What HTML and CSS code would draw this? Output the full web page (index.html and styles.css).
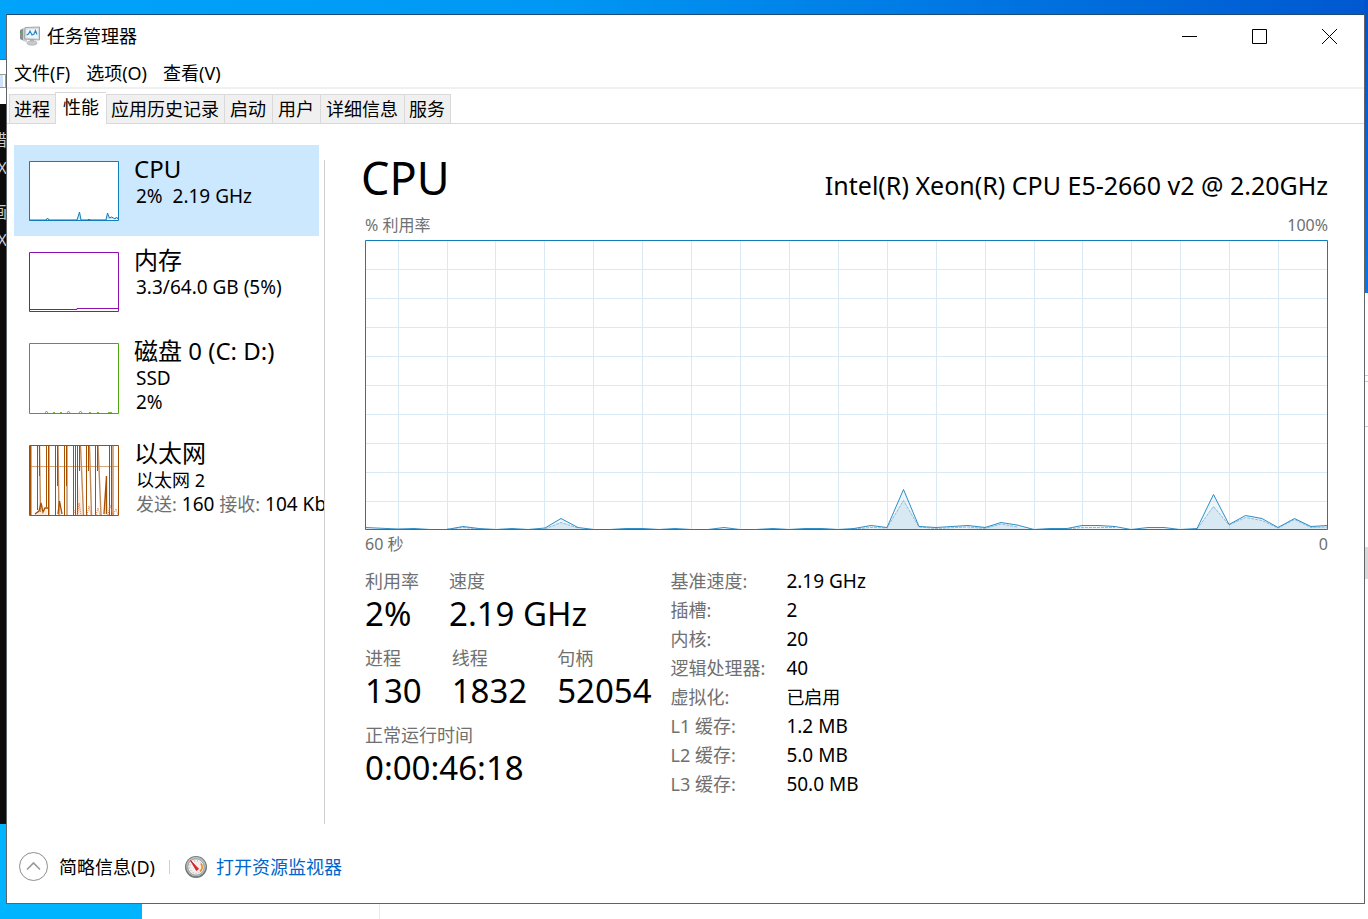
FILE: index.html
```html
<!DOCTYPE html>
<html lang="zh-CN">
<head>
<meta charset="utf-8">
<title>任务管理器</title>
<link rel="stylesheet" href="styles.css">
</head>
<body class="desktop">
<div class="backdrop" aria-hidden="true">
  <div class="sheet"></div>
  <div class="wallpaper-left"></div>
  <div class="explorer"><span class="explorer-box"></span></div>
  <div class="console">
    <span class="console-line line-a">错</span>
    <span class="console-line line-b">X</span>
    <span class="console-line line-c">画</span>
    <span class="console-line line-d">X</span>
  </div>
  <div class="edge-right"><span class="edge-thumb"></span></div>
</div>
<div class="window">
  <header class="titlebar">
    <svg class="app-icon" width="22" height="20" viewBox="0 0 22 20">
      <path d="M1 4l4-2v13l-4-2z" fill="#8b8f92"/>
      <path d="M4 2h4v14l-4-1z" fill="#c9cdcf"/>
      <path d="M1.500 5v2" stroke="#4da34a"/>
      <path d="M6 1.500L20.500 1v13L5.500 13z" fill="#d9dcde" stroke="#a2a6a9"/>
      <path d="M7.500 3.500L19 3v9.300L7 11.500z" fill="#eef7fd"/>
      <path d="M7.500 9l2-1 1.500-3 2 4 2-1 1.500-3.500 1.500 4" fill="none" stroke="#2b87c4" stroke-width="1.200"/>
      <path d="M11 14h4v2h-4z" fill="#b1b4b6"/>
      <ellipse cx="13" cy="17" rx="5" ry="2.200" fill="#c6c9cb" stroke="#a6a9ab" stroke-width=".6"/>
    </svg>
    <h1 class="window-title">任务管理器</h1>
    <div class="window-controls">
      <button class="control" type="button" aria-label="最小化"><svg width="15" height="15" viewBox="0 0 15 15"><path d="M0 7.500h15"/></svg></button>
      <button class="control" type="button" aria-label="最大化"><svg width="15" height="15" viewBox="0 0 15 15"><path d="M.5.5h14v14H.5z"/></svg></button>
      <button class="control" type="button" aria-label="关闭"><svg width="15" height="15" viewBox="0 0 15 15"><path d="M0 0l15 15M15 0L0 15"/></svg></button>
    </div>
  </header>
  <nav class="menubar">
    <button class="menu" type="button">文件(F)</button>
    <button class="menu" type="button">选项(O)</button>
    <button class="menu" type="button">查看(V)</button>
  </nav>
  <div class="tabs" role="tablist">
    <button class="tab tab-tight" type="button" role="tab">进程</button>
    <button class="tab tab-active" type="button" role="tab" aria-selected="true">性能</button>
    <button class="tab tab-tight" type="button" role="tab">应用历史记录</button>
    <button class="tab" type="button" role="tab">启动</button>
    <button class="tab" type="button" role="tab">用户</button>
    <button class="tab" type="button" role="tab">详细信息</button>
    <button class="tab tab-tight" type="button" role="tab">服务</button>
  </div>
  <div class="content">
    <aside class="resources">
      <button class="resource resource-selected" type="button">
        <svg class="thumb" width="90" height="60" viewBox="0 0 90 60">
          <path d="M.5.5h89v59H.5z" fill="#fff" stroke="#117dbb"/>
          <path d="M0 59h17l1.500-2 1.500 2h28l2.500-8 1.500 8h7l1-1 1 1h16l1.500-7 2 5 2-1 2 1 1.500 1 1.500-2 1.500 2" fill="#cfe2ef" stroke="#117dbb"/>
        </svg>
        <span class="resource-text"><span class="resource-name">CPU</span><span class="resource-sub">2%&nbsp; 2.19 GHz</span></span>
      </button>
      <button class="resource" type="button">
        <svg class="thumb" width="90" height="60" viewBox="0 0 90 60">
          <path d="M.5.5h89v59H.5z" fill="#fff" stroke="#8b12ae"/>
          <path d="M0 57.500h48v-1h42" fill="none" stroke="#8b12ae"/>
        </svg>
        <span class="resource-text"><span class="resource-name">内存</span><span class="resource-sub">3.3/64.0 GB (5%)</span></span>
      </button>
      <button class="resource" type="button">
        <svg class="thumb" width="90" height="71" viewBox="0 0 90 71">
          <path d="M.5.5h89v70H.5z" fill="#fff" stroke="#4da60c"/>
          <path d="M16 70l1.500-2 1.500 2M24 69.500h2M31 69.500h2M38 70l1.500-2 1.500 2M50 70l1.500-2 1.500 2M60 69.500h2M68 69.500h2M79 69.500h4" fill="none" stroke="#4da60c" stroke-opacity=".8"/>
        </svg>
        <span class="resource-text"><span class="resource-name">磁盘 0 (C: D:)</span><span class="resource-sub">SSD</span><span class="resource-sub">2%</span></span>
      </button>
      <button class="resource" type="button">
        <svg class="thumb" width="90" height="71" viewBox="0 0 90 71">
          <path d="M.5.5h89v70H.5z" fill="#fff" stroke="#a74f01"/>
          <path d="M5 70l6-7 2-5 2 5 3-1V70zM29 70l2-15 2 15zM47 70l3-32 4 32zM75 70l2-32 2 32z" fill="#fbe9dd"/>
          <path d="M1 21.500h88" stroke="#d2a780"/>
          <path d="M2 1v69M10.500 1l1 66M20 1v69M29 1l1 69M38 1v69M51.500 1l3 69M60.500 1l2 69M69 1l3 69M84 1v69" fill="none" stroke="#c08a5a" stroke-width="1.400"/>
          <path d="M1.500 1v69M8.500 1v64M10.500 1v30M17.500 1v61M19.500 1v69M26.500 1v69M28.500 1v40M35.500 1v69M37.500 1v40M44.500 1v69M46.500 1v69M48.500 1v69M50.500 1v25M57.500 1v69M59.500 1v25M66.500 1v69M68.500 1v25M80.500 1v69M82.500 1v69" stroke="#a74f01"/>
          <path d="M6 69l4-3 2-8 2 9 2-4h3M29 69l1.500-13L33 69M75 69l2.500-38v38" fill="none" stroke="#a74f01" stroke-width="1.300"/>
          <path d="M45 68l1-3M48.500 70l1.500-12 2 12M58 70l2-9 2 9M67 70l2-7 2 7M79 70l2-10 3 10 3-6 2 6" fill="none" stroke="#e8753c" stroke-dasharray="1 1"/>
        </svg>
        <span class="resource-text"><span class="resource-name">以太网</span><span class="resource-sub cjk">以太网 2</span><span class="resource-sub"><span class="muted cjk">发送:</span> 160 <span class="muted cjk">接收:</span> 104 Kbps</span></span>
      </button>
    </aside>
    <div class="divider"></div>
    <main class="detail">
      <div class="detail-head"><h2 class="detail-title">CPU</h2><span class="model">Intel(R) Xeon(R) CPU E5-2660 v2 @ 2.20GHz</span></div>
      <div class="axis axis-top"><span>% 利用率</span><span>100%</span></div>
      <svg class="chart" viewBox="0 0 963 290" preserveAspectRatio="none" role="img" aria-label="CPU 利用率">
        <path class="grid" d="M33.500 1v288M82.500 1v288M130.500 1v288M179.500 1v288M228.500 1v288M277.500 1v288M326.500 1v288M375.500 1v288M424.500 1v288M473.500 1v288M522.500 1v288M571.500 1v288M620.500 1v288M669.500 1v288M717.500 1v288M766.500 1v288M815.500 1v288M864.500 1v288M913.500 1v288M1 29.500h961M1 58.500h961M1 87.500h961M1 116.500h961M1 145.500h961M1 174.500h961M1 203.500h961M1 232.500h961M1 261.500h961"/>
        <path class="area" d="M0 290V288L33 289L49 288.500L65 289.500H82L98 286.500L114 288.500L131 289.500L147 288.500L163 289.500L180 288L196 278.500L213 287.500L229 289.500H245L261 288.500H278L294 289.500L310 288.500L326 289.500H343L359 287.500L375 289.500H391L408 288.500L424 289.500L440 288.500H457L473 289.500L489 288.500L506 285.500L522 287.500L538.500 249.500L554 286.500L571 287.500L587 286.500L603 285.500L620 287.500L636 282.500L652 285L669 289.500L685 288.500H702L717 285.500H734L750 286.500L766 289.500L783 287.500H799L815 289.500L832 288.500L848.500 254.500L864 284.500L880.500 275.500L897 278.500L913 287.500L929.500 278.500L946 286.500L962 285.500V290z"/>
        <path class="area kernel-area" d="M180 289L196 282.500L213 288L229 290zM522 288L538.500 260.500L554 287V290H522zM603 288L636 284L652 287L669 290H603zM832 289L848.500 266.500L864 285L880.500 277.500L897 280.500L913 288L929.500 279.500L946 287L962 287V290H832z"/>
        <path class="kernel" d="M82 289L98 287.500L114 289M180 289L196 282.500L213 288M489 289L506 287.500L522 288L538.500 260.500L554 287L571 288.500L603 287L620 288.500L636 284L652 287M700 289L717 287.500H750M832 289L848.500 266.500L864 285L880.500 277.500L897 280.500L913 288L929.500 279.500L946 287.500L962 287"/>
        <path class="usage" d="M0 287.500L33 289L49 288.500L65 289.500H82L98 286.500L114 288.500L131 289.500L147 288.500L163 289.500L180 288L196 278.500L213 287.500L229 289.500H245L261 288.500H278L294 289.500L310 288.500L326 289.500H343L359 287.500L375 289.500H391L408 288.500L424 289.500L440 288.500H457L473 289.500L489 288.500L506 285.500L522 287.500L538.500 249.500L554 286.500L571 287.500L587 286.500L603 285.500L620 287.500L636 282.500L652 285L669 289.500L685 288.500H702L717 285.500H734L750 286.500L766 289.500L783 287.500H799L815 289.500L832 288.500L848.500 254.500L864 284.500L880.500 275.500L897 278.500L913 287.500L929.500 278.500L946 286.500L962 285.500"/>
        <path class="frame" d="M.5.5h962v289H.5z"/>
      </svg>
      <div class="axis axis-bottom"><span>60 秒</span><span>0</span></div>
      <div class="stats">
        <div class="counters">
          <dl class="counter-row">
            <div><dt>利用率</dt><dd>2%</dd></div>
            <div><dt>速度</dt><dd>2.19 GHz</dd></div>
          </dl>
          <dl class="counter-row">
            <div><dt>进程</dt><dd>130</dd></div>
            <div><dt>线程</dt><dd>1832</dd></div>
            <div><dt>句柄</dt><dd>52054</dd></div>
          </dl>
          <dl class="counter-row">
            <div><dt>正常运行时间</dt><dd>0:00:46:18</dd></div>
          </dl>
        </div>
        <dl class="facts">
          <dt>基准速度:</dt><dd>2.19 GHz</dd>
          <dt>插槽:</dt><dd>2</dd>
          <dt>内核:</dt><dd>20</dd>
          <dt>逻辑处理器:</dt><dd>40</dd>
          <dt>虚拟化:</dt><dd class="cjk">已启用</dd>
          <dt>L1 缓存:</dt><dd>1.2 MB</dd>
          <dt>L2 缓存:</dt><dd>5.0 MB</dd>
          <dt>L3 缓存:</dt><dd>50.0 MB</dd>
        </dl>
      </div>
    </main>
  </div>
  <footer class="footer">
    <button class="less" type="button">
      <svg width="29" height="29" viewBox="0 0 29 29" fill="none"><circle cx="14.500" cy="14.500" r="14" stroke="#8d8d8d"/><path d="M8 17.500l6.500-6.500 6.500 6.500" stroke="#9a9a9a" stroke-width="1.600"/></svg>
      <span>简略信息(D)</span>
    </button>
    <span class="footer-rule"></span>
    <a class="monitor" href="#">
      <svg width="24" height="24" viewBox="0 0 24 24">
        <circle cx="12" cy="12" r="11" fill="#6d7779"/>
        <circle cx="12" cy="11.500" r="9.800" fill="#b9c0c1"/>
        <circle cx="12" cy="12" r="8.200" fill="#f1efec" stroke="#8c9393" stroke-width=".8"/>
        <circle cx="12" cy="12" r="6.300" fill="none" stroke="#a9a9a6" stroke-dasharray="1 2"/>
        <path d="M17 8.500a6 6 0 0 1-1 8" fill="none" stroke="#f08a24" stroke-width="1.800"/>
        <path d="M6.500 5.500l8 8.500-2 1.500z" fill="#d8232a" stroke="#d8232a"/>
      </svg>
      <span>打开资源监视器</span>
    </a>
  </footer>
</div>
</body>
</html>
```
FILE: styles.css
```css
* {
  box-sizing: border-box;
}

.desktop {
  margin: 0;
  min-height: 100vh;
  padding: 14px 3px 15px 6px;
  display: flex;
  position: relative;
  background: linear-gradient(90deg, #00a4fa 0%, #0098f4 40%, #0072e0 75%, #0058d0 100%);
  color: #000;
  font: 18px/24px "Noto Sans", "Noto Sans CJK SC", sans-serif;
}

button {
  padding: 0;
  border: 0;
  background: none;
  color: inherit;
  font: inherit;
  text-align: left;
}

h1, h2, dl, dd {
  margin: 0;
  font-weight: 400;
}

/* Desktop behind the window */
.backdrop {
  position: absolute;
  inset: 0;
  overflow: hidden;
}

.sheet {
  position: absolute;
  inset: auto 0 0 142px;
  height: 24px;
  background: linear-gradient(90deg, #fff 237px, #ebebeb 237px, #ebebeb 238px, #fff 238px);
}

.wallpaper-left {
  position: absolute;
  left: 0;
  bottom: 0;
  width: 142px;
  height: 95px;
  background: #00b4ff;
}

.explorer {
  position: absolute;
  left: 0;
  top: 59px;
  width: 7px;
  height: 45px;
  background: #fff;
  border-top: 1px solid #2f78a8;
}

.explorer-box {
  position: absolute;
  left: -2px;
  top: 14px;
  width: 8px;
  height: 14px;
  border: 1px solid #9a9a9a;
  background: linear-gradient(90deg, #cfe4fb 60%, #fff 60%);
}

.console {
  position: absolute;
  left: 0;
  top: 104px;
  bottom: 95px;
  width: 7px;
  overflow: hidden;
  background: #0c0c0c;
  color: #ccc;
  font-size: 16px;
}

.console-line {
  position: absolute;
  right: 0;
}

.line-a { top: 24px; }
.line-b { top: 52px; }
.line-c { top: 96px; }
.line-d { top: 124px; }

.edge-right {
  position: absolute;
  right: 0;
  top: 0;
  bottom: 0;
  width: 4px;
  background: linear-gradient(#0052cc, #0078f0 293px, #fff 293px, #fff 375px, #ccc 375px, #ccc 376px, #fff 376px, #fff 381px, #ccc 381px, #ccc 382px, #fff 382px, #fff 426px, #ccc 426px, #ccc 427px, #fff 427px);
}

.edge-thumb {
  position: absolute;
  top: 547px;
  right: 0;
  width: 4px;
  height: 32px;
  background: #d9d9d9;
}

/* Window */
.window {
  position: relative;
  flex: 1;
  min-width: 0;
  display: flex;
  flex-direction: column;
  background: #fff;
  border: 1px solid #5f6468;
  border-top-color: #1d4a78;
}

.titlebar {
  display: flex;
  align-items: center;
  height: 44px;
  padding: 0 0 2px 12px;
}

.window-title {
  margin-left: 6px;
  font-size: 18px;
}

.window-controls {
  display: flex;
  align-self: stretch;
  margin-left: auto;
}

.control {
  display: grid;
  place-items: center;
  width: 70px;
}

.control path {
  fill: none;
  stroke: #000;
}

.menubar {
  display: flex;
  gap: 16px;
  height: 30px;
  padding: 2px 7px 4px;
  border-bottom: 2px solid #f0f0f0;
}

.tabs {
  display: flex;
  align-items: flex-end;
  height: 35px;
  padding-left: 2px;
  border-bottom: 1px solid #d9d9d9;
}

.tab {
  height: 29px;
  padding: 0 6px 0 5px;
  border: 1px solid #d9d9d9;
  border-width: 1px 0 0 1px;
  background: #f0f0f0;
}

.tab-tight {
  padding: 0 5px 0 4px;
}

.tab:last-child {
  border-right-width: 1px;
}

.tab-active {
  height: 32px;
  margin-bottom: -1px;
  padding: 0 7px 4px;
  background: #fff;
}

.content {
  flex: 1;
  display: flex;
}

.resources {
  flex: none;
  width: 317px;
  padding: 21px 0 0 7px;
  overflow: hidden;
}

.resource {
  display: flex;
  align-items: flex-start;
  gap: 15px;
  width: 305px;
  padding: 9px 0 15px 15px;
  white-space: nowrap;
}

.resource-selected {
  background: #cce8ff;
}

.thumb {
  flex: none;
  margin-top: 7px;
}

.resource-text {
  display: flex;
  flex-direction: column;
  height: 67px;
}

.resource-name {
  font-size: 24px;
  line-height: 30px;
}

.resource-sub {
  padding-left: 2px;
  font-size: 19px;
}

.muted {
  color: #707070;
}

.divider {
  flex: none;
  width: 1px;
  margin: 36px 0 6px;
  background: #d0d0d0;
}

.detail {
  flex: 1;
  min-width: 0;
  padding: 26px 36px 0 40px;
}

.detail-head {
  display: flex;
  justify-content: space-between;
  align-items: baseline;
  height: 56px;
}

.detail-title {
  margin-left: -4px;
  font-size: 45px;
  line-height: 56px;
}

.model {
  font-size: 25px;
}

.axis {
  display: flex;
  justify-content: space-between;
  color: #707070;
  font-size: 16px;
}

.axis-top {
  padding: 7px 0 3px;
}

.axis-bottom {
  padding: 2px 0 11px;
}

.chart {
  display: block;
  width: 100%;
  height: 290px;
}

.chart path {
  fill: none;
  vector-effect: non-scaling-stroke;
}

.chart .grid { stroke: #d9eaf4; }
.chart .area { fill: #117dbb; fill-opacity: .08; }
.chart .kernel-area { fill-opacity: .09; }
.chart .kernel { stroke: #8bbcdb; stroke-dasharray: 3 1; }
.chart .usage { stroke: #2f8ec6; }
.chart .frame { stroke: #117dbb; }

.stats {
  display: flex;
  align-items: flex-start;
  gap: 19px;
}

.counters {
  display: flex;
  flex-direction: column;
  gap: 12px;
}

.counter-row {
  display: flex;
  gap: 30px;
}

.counter-row dt,
.facts dt {
  color: #707070;
  line-height: 29px;
}

.counter-row dd {
  font-size: 33px;
  line-height: 36px;
}

.facts {
  display: grid;
  grid-template-columns: auto auto;
  column-gap: 21px;
}

.facts dd {
  font-size: 19px;
  line-height: 29px;
}

.resources .cjk,
.facts .cjk {
  font-size: 18px;
}

.footer {
  display: flex;
  align-items: center;
  gap: 14px;
  height: 73px;
  padding-left: 12px;
}

.less,
.monitor {
  display: flex;
  align-items: center;
  gap: 11px;
}

.monitor {
  gap: 8px;
  color: #0066cc;
  text-decoration: none;
}

.footer-rule {
  width: 1px;
  height: 14px;
  background: #d0d0d0;
}
```
